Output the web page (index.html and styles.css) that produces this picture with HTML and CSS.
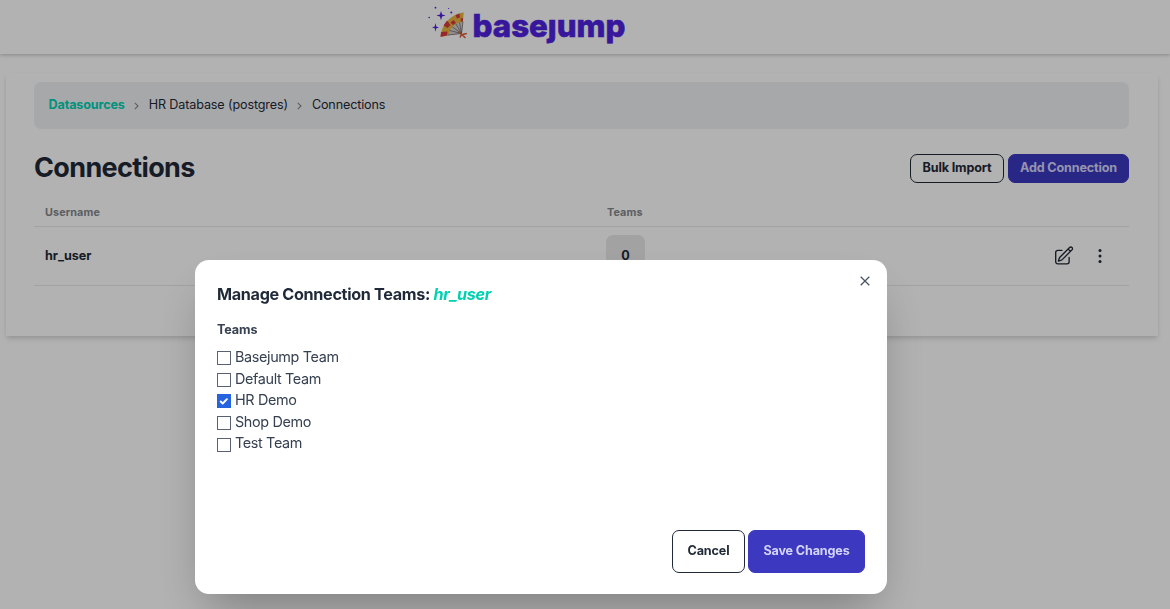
FILE: index.html
```html
<!DOCTYPE html>
<html lang="en">
<head>
<meta charset="utf-8">
<title>Connections</title>
<link rel="stylesheet" href="styles.css">
</head>
<body>
<header class="topbar">
  <svg class="logo" width="200" height="50" viewBox="428 2 200 50" role="img" aria-label="basejump">
    <g fill="#4f22df">
      <path d="M441 11l1.100 3.400 3.600 1.100-3.600 1.100-1.100 3.600-1.100-3.600-3.600-1.100 3.600-1.100z"/>
      <path d="M435.500 23l.8 3.600 2.700.8-2.700.8-.8 3.600-.8-3.600-2.700-.8 2.700-.8z"/>
      <circle cx="435.500" cy="7.700" r=".9"/><circle cx="451.300" cy="12.500" r="1"/><circle cx="448.600" cy="8.500" r=".6"/><circle cx="429.200" cy="17.500" r=".8"/>
    </g>
    <path d="M462 33.500L440.500 36.500A27 27 0 0 1 463.500 12.500Z" fill="#d2cdc9"/>
    <path d="M440.500 37A27 27 0 0 1 463.500 12.500L462.800 21.500Q450 24 448 35.500Z" fill="#e9b33f"/>
    <path d="M441 32L447.500 31.500L447 35.500L440.600 36.800Z M443.500 25.500L447 20.500L450.500 25L447.500 28Z M450.500 22.500L453.500 20L456 23L453 25Z M455.500 15L459.500 13.800L460 17.500L457 18.500Z M460.500 18.500L463.200 18L462.800 21.500L461 22Z" fill="#d83b40"/>
    <path d="M461.500 33.500L448 35M461.500 33.500L449.500 30.500M461.500 33.500L452.500 27M461.500 33.500L456 24M461.500 33.500L459.500 22.500M461.500 33.500L463 21.500" stroke="#625b60" stroke-width=".7" fill="none"/>
    <path d="M458.500 31.500l7 6.500M462.500 34.500l4.300-1M461.500 34l-1.500 3.500" stroke="#d65a35" stroke-width="1.500"/>
    <text class="wordmark" x="472.500" y="36.700" textLength="153" lengthAdjust="spacingAndGlyphs">baseȷump</text>
  </svg>
</header>
<main class="card">
  <nav class="crumbs">
    <a class="crumb-link">Datasources</a>
    <svg class="chevron" width="5" height="8" viewBox="0 0 5 8"><path d="M.8.8L4 4 .8 7.200"/></svg>
    <span>HR Database (postgres)</span>
    <svg class="chevron" width="5" height="8" viewBox="0 0 5 8"><path d="M.8.8L4 4 .8 7.200"/></svg>
    <span>Connections</span>
  </nav>
  <div class="heading">
    <h1>Connections</h1>
    <div class="actions"><button class="btn outline small">Bulk Import</button><button class="btn primary small">Add Connection</button></div>
  </div>
  <div class="table">
    <div class="row head"><span>Username</span><span>Teams</span></div>
    <div class="row data">
      <span>hr_user</span>
      <span class="count-cell"><span class="count">0</span></span>
      <span class="tools">
        <svg width="21.500" height="21.500" viewBox="0 0 24 24" fill="none" stroke="currentColor" stroke-width="1.500" stroke-linecap="round" stroke-linejoin="round"><path d="M16.862 4.487l1.687-1.688a1.875 1.875 0 112.652 2.652L10.582 16.070a4.500 4.500 0 01-1.897 1.130L6 18l.8-2.685a4.500 4.500 0 011.130-1.897l8.932-8.931zm0 0L19.500 7.125M18 14v4.750A2.250 2.250 0 0115.750 21H5.250A2.250 2.250 0 013 18.750V8.250A2.250 2.250 0 015.250 6H10"/></svg>
        <svg width="4" height="16" viewBox="0 0 4 16" fill="currentColor"><circle cx="2" cy="2.400" r="1.500"/><circle cx="2" cy="8" r="1.500"/><circle cx="2" cy="13.600" r="1.500"/></svg>
      </span>
    </div>
  </div>
</main>
<div class="overlay">
  <section class="modal">
    <svg class="close" width="10" height="10" viewBox="0 0 10 10"><path d="M.7.7l8.600 8.600M9.300.7L.7 9.300"/></svg>
    <h2>Manage Connection Teams: <em>hr_user</em></h2>
    <h3>Teams</h3>
    <div class="teams">
      <label><i class="box"></i><span>Basejump Team</span></label>
      <label><i class="box"></i><span>Default Team</span></label>
      <label><i class="box checked"><svg width="14" height="14" viewBox="0 0 14 14"><path d="M3.700 7.500l2 2 4.200-4.300"/></svg></i><span>HR Demo</span></label>
      <label><i class="box"></i><span>Shop Demo</span></label>
      <label><i class="box"></i><span>Test Team</span></label>
    </div>
    <footer><button class="btn outline">Cancel</button><button class="btn primary">Save Changes</button></footer>
  </section>
</div>
</body>
</html>
```
FILE: styles.css
```css
* { box-sizing: border-box; }
body { margin: 0; height: 609px; overflow: hidden; background: #fff; color: #1f2937; font: 13px/18px Inter, "Liberation Sans", sans-serif; }
h1, h2, h3 { margin: 0; }
.topbar { height: 54px; display: flex; justify-content: center; padding: 2px 0 0; margin-bottom: 19px; box-shadow: 0 1px 3px rgba(0,0,0,.15), 0 2px 4px rgba(0,0,0,.08); }
.logo { margin-left: -114px; overflow: visible; }
.wordmark { font: 800 31.5px Inter, sans-serif; fill: #4f22df; stroke: #4f22df; stroke-width: .6; }
.card { width: 1152px; height: 263px; margin-left: 6px; padding: 9px 29px 0 28px; box-shadow: 0 4px 6px -1px rgba(0,0,0,.1), 0 2px 4px -1px rgba(0,0,0,.1); }
.crumbs { height: 47px; display: flex; align-items: flex-start; padding: 14px 14.5px; background: #f0f1f4; border-radius: 7px; font-size: 12.6px; letter-spacing: -.14px; }
.crumb-link { color: #00d1b2; font-weight: 700; }
.chevron { margin: 6px 10px 0 9px; fill: none; stroke: #85888d; stroke-width: 1.1; }
.heading { height: 68px; display: flex; justify-content: space-between; padding-top: 22px; }
h1 { font-size: 27px; line-height: 34px; font-weight: 700; letter-spacing: -.64px; }
.actions { display: flex; gap: 4px; padding-top: 3px; }
.btn { height: 43px; padding: 0 0 1px; font: 700 12.6px/18px Inter, "Liberation Sans", sans-serif; letter-spacing: -.15px; border-radius: 7px; border: 1px solid #1f2937; background: transparent; color: #1f2937; width: 73px; }
.btn.primary { width: 117px; background: #3c38bf; border-color: #3c38bf; color: #d4d5fb; }
.btn.small { height: 29px; width: 94px; padding-bottom: 2px; }
.btn.primary.small { width: 121px; }
.row { display: grid; grid-template-columns: 562px 446px 1fr; align-items: center; padding-left: 11px; border-bottom: 1px solid #e7e8ea; }
.head { height: 30px; padding-top: 2px; color: #85888d; font-size: 10.8px; font-weight: 700; letter-spacing: .1px; }
.data { height: 59px; font-weight: 700; font-size: 12.6px; }
.count-cell { display: flex; margin-left: -1px; }
.count { display: flex; width: 39px; height: 43px; align-items: center; justify-content: center; background: #e9e9e9; border-radius: 7px; }
.tools { display: flex; align-items: center; gap: 23px; }
.overlay { position: fixed; inset: 0; padding: 260px 0 0 195px; background: rgba(0,0,0,.3); }
.modal { position: relative; width: 692px; height: 334px; padding: 24px 22px 21px; display: flex; flex-direction: column; background: #fff; border-radius: 14px; box-shadow: 0 25px 50px -12px rgba(0,0,0,.3); }
.close { position: absolute; top: 16px; right: 17px; fill: none; stroke: #4b5563; stroke-width: 1.3; }
h2 { font-size: 16.2px; line-height: 21px; font-weight: 700; letter-spacing: -.33px; }
h2 em { color: #00d1b2; font-weight: 700; }
h3 { margin-top: 16px; font-size: 12.6px; line-height: 18px; font-weight: 700; letter-spacing: -.1px; color: #374151; }
.teams { margin-top: 7px; font-size: 14.4px; line-height: 21.6px; letter-spacing: -.36px; color: #374151; }
.teams label { display: flex; height: 21.6px; align-items: center; gap: 4px; }
.box { width: 14px; height: 14px; margin-top: 3px; border: 1px solid #596273; }
.box.checked { background: #2563df; border: 0; }
.box svg { display: block; fill: none; stroke: #fff; stroke-width: 1.9; stroke-linecap: round; stroke-linejoin: round; }
footer { display: flex; justify-content: flex-end; gap: 3px; margin-top: auto; }
```
